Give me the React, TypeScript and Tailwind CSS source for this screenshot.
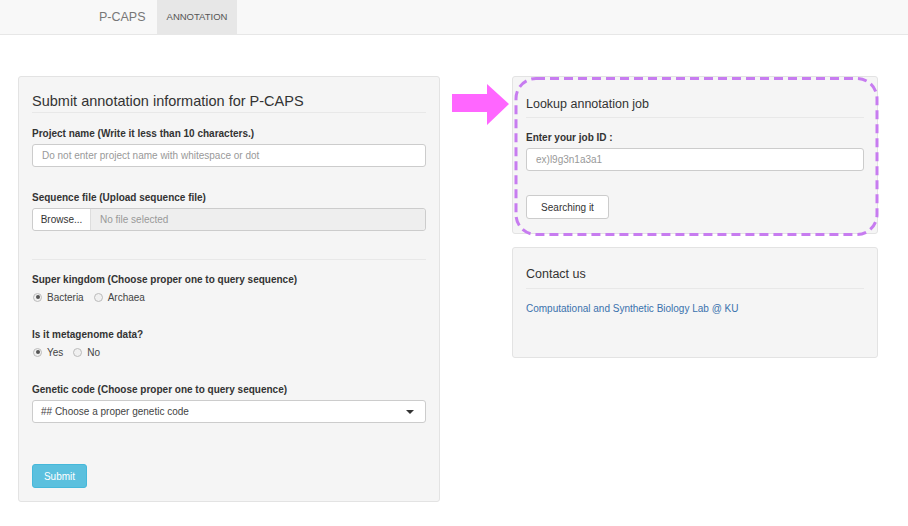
import React from 'react';

const font = { fontFamily: '"Liberation Sans", Arial, sans-serif' };

const Radio = ({ checked, label }: { checked?: boolean; label: string }) => (
    <span className="flex items-center mr-[10px]">
        <span className="w-[9px] h-[9px] rounded-full border border-[#bbb] bg-[#f0f0f0] flex items-center justify-center mr-[5px]">
            {checked && <span className="w-[4px] h-[4px] rounded-full bg-[#555]" />}
        </span>
        <span className="text-[10px] text-[#444]">{label}</span>
    </span>
);

const Label = ({ children }: { children: React.ReactNode }) => (
    <div className="text-[10px] leading-[14px] font-bold text-[#333]">{children}</div>
);

export default function App() {
    return <div style={font} className="w-[908px] h-[526px] bg-white text-[#333] overflow-hidden">
        <nav className="h-[35px] bg-[#f8f8f8] border-b border-[#e7e7e7] flex items-stretch pl-[99px]">
            <div className="flex items-center text-[12.5px] text-[#777] pr-[11px]">P-CAPS</div>
            <div className="flex items-center bg-[#e7e7e7] px-[10px] text-[9.5px] text-[#555]">ANNOTATION</div>
        </nav>

        <div className="flex items-start pl-[18px] pt-[41px] gap-[72px]">
            {/* left form */}
            <div className="w-[422px] bg-[#f5f5f5] border border-[#e3e3e3] rounded-[3px] px-[13px] pt-[15px] pb-[13px]">
                <div className="text-[14.5px] leading-[18px] pb-[2px] border-b border-[#e8e8e8]">Submit annotation information for P-CAPS</div>

                <div className="mt-[14px]">
                    <Label>Project name (Write it less than 10 characters.)</Label>
                    <div className="mt-[3px] h-[23px] bg-white border border-[#ccc] rounded-[3px] flex items-center px-[9px] text-[10px] text-[#999]">
                        Do not enter project name with whitespace or dot
                    </div>
                </div>

                <div className="mt-[24px]">
                    <Label>Sequence file (Upload sequence file)</Label>
                    <div className="mt-[3px] h-[23px] border border-[#ccc] rounded-[3px] flex text-[10px]">
                        <div className="w-[58px] bg-white flex items-center justify-center text-[#333] border-r border-[#ddd] rounded-l-[3px]">Browse...</div>
                        <div className="flex-1 bg-[#eee] flex items-center px-[9px] text-[#999] rounded-r-[3px]">No file selected</div>
                    </div>
                </div>

                <div className="mt-[28px] border-t border-[#e8e8e8]" />

                <div className="mt-[13px]">
                    <Label>Super kingdom (Choose proper one to query sequence)</Label>
                    <div className="mt-[3px] h-[14px] flex items-center pl-[1px]">
                        <Radio checked label="Bacteria" />
                        <Radio label="Archaea" />
                    </div>
                </div>

                <div className="mt-[24px]">
                    <Label>Is it metagenome data?</Label>
                    <div className="mt-[3px] h-[14px] flex items-center pl-[1px]">
                        <Radio checked label="Yes" />
                        <Radio label="No" />
                    </div>
                </div>

                <div className="mt-[24px]">
                    <Label>Genetic code (Choose proper one to query sequence)</Label>
                    <div className="mt-[3px] h-[23px] bg-white border border-[#ccc] rounded-[3px] flex items-center justify-between pl-[8px] pr-[11px] text-[10px] text-[#444]">
                        <span>## Choose a proper genetic code</span>
                        <span className="w-0 h-0 border-l-[4px] border-r-[4px] border-t-[4px] border-l-transparent border-r-transparent border-t-[#333]" />
                    </div>
                </div>

                <button className="mt-[41px] h-[24px] w-[55px] bg-[#5bc0de] border border-[#46b8da] rounded-[3px] text-white text-[10px] flex items-center justify-center">
                    Submit
                </button>
            </div>

            {/* right column */}
            <div className="w-[366px] flex flex-col gap-[13px]">
                <div className="relative bg-[#f5f5f5] border border-[#e3e3e3] rounded-[3px] px-[13px] pt-[19px] pb-[14px]">
                    <div className="text-[12.5px] leading-[16px] pb-[5px] border-b border-[#e8e8e8]">Lookup annotation job</div>
                    <div className="mt-[13px]">
                        <Label>Enter your job ID :</Label>
                        <div className="mt-[3px] h-[23px] bg-white border border-[#ccc] rounded-[3px] flex items-center px-[9px] text-[10px] text-[#999]">
                            ex)l9g3n1a3a1
                        </div>
                    </div>
                    <button className="mt-[24px] h-[24px] w-[83px] bg-white border border-[#ccc] rounded-[3px] text-[#333] text-[10px] flex items-center justify-center">
                        Searching it
                    </button>

                    <svg className="absolute left-[0px] top-[-1px] pointer-events-none" width="366" height="162" viewBox="0 0 366 162">
                        <rect x="3" y="2.5" width="361" height="156" rx="20" fill="none" stroke="#c77cf0" strokeWidth="3" strokeDasharray="9 5" />
                    </svg>
                    <svg className="absolute left-[-61px] top-[6px] pointer-events-none" width="60" height="44" viewBox="0 0 60 44">
                        <polygon points="0,11 35,11 35,1 57,21 35,42 35,29 0,29" fill="#ff66ff" />
                    </svg>
                </div>

                <div className="h-[111px] bg-[#f5f5f5] border border-[#e3e3e3] rounded-[3px] px-[13px] pt-[18px]">
                    <div className="text-[12.5px] leading-[16px] pb-[6px] border-b border-[#e8e8e8]">Contact us</div>
                    <div className="mt-[13px] text-[10px] leading-[14px] text-[#3a72ad]">Computational and Synthetic Biology Lab @ KU</div>
                </div>
            </div>
        </div>
    </div>;
}
